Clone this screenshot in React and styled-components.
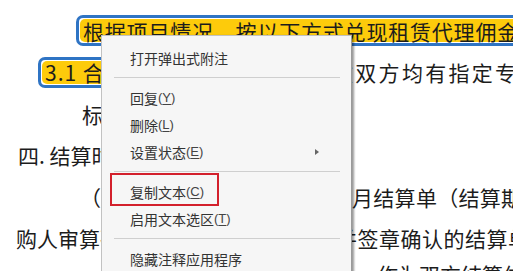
import React from 'react'
import styled, { createGlobalStyle } from 'styled-components'

const GlobalStyle = createGlobalStyle`
    html, body {
        margin: 0;
        padding: 0;
        background: #ffffff;
        overflow: hidden;
    }
    #root {
        width: 513px;
        height: 271px;
        overflow: hidden;
        position: relative;
    }
`

const Page = styled.div`
    position: relative;
    width: 513px;
    height: 271px;
    overflow: hidden;
    background: #fff;
`

const Doc = styled.div`
    padding-top: 10px;
    font-family: "Noto Sans CJK SC", "Liberation Serif", serif;
    font-size: 21px;
    color: #1c1c1c;
    white-space: nowrap;
`

const Line = styled.div`
    display: grid;
    grid-template-columns: ${(p) => p.split || 352}px 1fr;
    align-items: center;
    height: ${(p) => p.h || 41.5}px;
`

const Left = styled.div`
    padding-left: ${(p) => p.indent || 0}px;
    overflow: hidden;
`

const Right = styled.div`
    overflow: hidden;
    letter-spacing: ${(p) => p.spacing || 0}px;
`

const FullLine = styled.div`
    display: flex;
    align-items: center;
    height: 41.5px;
    padding-left: ${(p) => p.indent || 0}px;
`

const Mark = styled.span`
    display: inline-flex;
    align-items: center;
    height: 31px;
    box-sizing: border-box;
    border: 3px solid #2f74c4;
    border-radius: 7px;
    padding: 1px;
    background: #fff;
    ${(p) => (p.open ? 'border-right: none; border-top-right-radius: 0; border-bottom-right-radius: 0;' : '')}
`

const MarkFill = styled.span`
    display: flex;
    align-items: center;
    height: 100%;
    background: #fdcb0b;
    border-radius: 5px;
    padding: 0 ${(p) => p.pad || 3}px;
    letter-spacing: ${(p) => p.spacing || 0}px;
`

const Menu = styled.div`
    position: absolute;
    left: 101px;
    top: 35px;
    width: 251px;
    height: 260px;
    box-sizing: border-box;
    padding-top: 8px;
    background: #f6f6f6;
    border: 1px solid #c2c2c2;
    border-right-color: #9a9a9a;
    box-shadow: 2px 1px 2px rgba(0, 0, 0, 0.4);
    font-family: "Noto Sans CJK SC", "Liberation Sans", sans-serif;
    font-size: 14px;
    color: #333;
`

const Item = styled.div`
    position: relative;
    display: flex;
    align-items: center;
    height: 27px;
    padding-left: 28px;
`

const Key = styled.span`
    text-decoration: underline;
    text-underline-offset: 2px;
    font-family: "Liberation Sans", sans-serif;
    font-size: 13px;
    color: #444;
`

const Paren = styled.span`
    font-family: "Liberation Sans", sans-serif;
    font-size: 13px;
    color: #444;
`

const Arrow = styled.span`
    margin-left: auto;
    margin-right: 32px;
    width: 0;
    height: 0;
    border-left: 4px solid #666;
    border-top: 3.5px solid transparent;
    border-bottom: 3.5px solid transparent;
`

const Separator = styled.div`
    height: 13px;
    display: flex;
    align-items: center;
    padding: 0 11px 0 12px;
    &::after {
        content: '';
        flex: 1;
        height: 1px;
        background: #cfcfcf;
    }
`

const Callout = styled.div`
    position: absolute;
    left: 8px;
    top: -5px;
    width: 109px;
    height: 33px;
    box-sizing: border-box;
    border: 2px solid #d3202c;
`

function Label({ text, k, sub }) {
    return (
        <>
            <span>{text}</span>
            {k && (
                <>
                    <Paren>(</Paren>
                    <Key>{k}</Key>
                    <Paren>)</Paren>
                </>
            )}
            {sub && <Arrow />}
        </>
    )
}

export default function App() {
    return (
        <Page>
            <GlobalStyle />
            <Doc>
                <FullLine indent={76}>
                    <Mark open>
                        <MarkFill pad={3} spacing={0.8}>
                            根据项目情况，按以下方式兑现租赁代理佣金：
                        </MarkFill>
                    </Mark>
                </FullLine>
                <Line split={332}>
                    <Left indent={38}>
                        <Mark>
                            <MarkFill pad={3} spacing={1}>3.1 合同签订后</MarkFill>
                        </Mark>
                    </Left>
                    <Right spacing={2.3}>效双方均有指定专人</Right>
                </Line>
                <Line>
                    <Left indent={82}>标的物验收合格后</Left>
                    <Right />
                </Line>
                <Line>
                    <Left indent={18}>四. 结算时间</Left>
                    <Right />
                </Line>
                <Line>
                    <Left indent={80}>（一）每月出具月结算单</Left>
                    <Right spacing={0.3}>月结算单（结算期</Right>
                </Line>
                <Line split={336}>
                    <Left indent={16}>购人审算确认后并签</Left>
                    <Right spacing={0.5}>并签章确认的结算单</Right>
                </Line>
                <Line split={356} h={29}>
                    <Left />
                    <Right>，作为双方结算依据</Right>
                </Line>
            </Doc>

            <Menu>
                <Item>
                    <Label text="打开弹出式附注" />
                </Item>
                <Separator />
                <Item>
                    <Label text="回复" k="Y" />
                </Item>
                <Item>
                    <Label text="删除" k="L" />
                </Item>
                <Item>
                    <Label text="设置状态" k="E" sub />
                </Item>
                <Separator />
                <Item>
                    <Label text="复制文本" k="C" />
                    <Callout />
                </Item>
                <Item>
                    <Label text="启用文本选区" k="T" />
                </Item>
                <Separator />
                <Item>
                    <Label text="隐藏注释应用程序" />
                </Item>
            </Menu>
        </Page>
    )
}
